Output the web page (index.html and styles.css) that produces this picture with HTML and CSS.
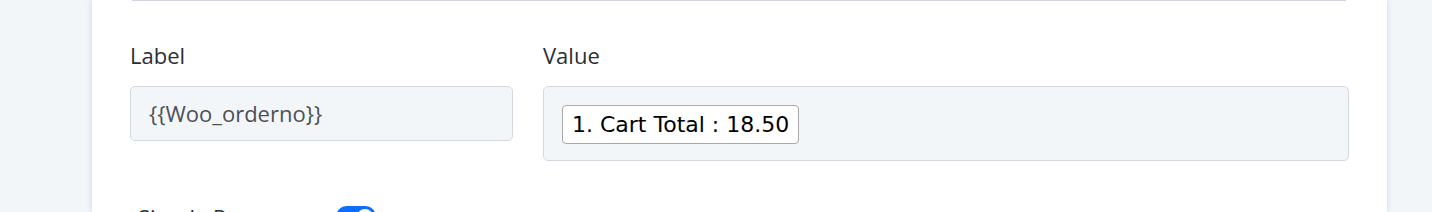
FILE: index.html
```html
<!DOCTYPE html>
<html lang="en">
    <head>
        <meta charset="UTF-8">
        <meta name="viewport" content="width=device-width, initial-scale=1.0">
        <title>Variables</title>
        <link rel="stylesheet" href="styles.css">
    </head>
    <body>
        <main class="card">
            <div class="box-above"></div>

            <section class="campos">
                <div class="campo">
                    <label class="rotulo">Label</label>
                    <div class="entrada">{{Woo_orderno}}</div>
                </div>
                <div class="campo">
                    <label class="rotulo">Value</label>
                    <div class="entrada-valor">
                        <span class="chip">1. Cart Total : 18.50</span>
                    </div>
                </div>
            </section>

            <section class="linha-toggle">
                <span class="texto-toggle">Simple Response</span>
                <span class="toggle"><span class="bolinha"></span></span>
            </section>
        </main>
    </body>
</html>
```

FILE: styles.css
```css
* {
    padding: 0px;
    margin: 0px;
    box-sizing: border-box;
}

body {
    background-color: #f3f6f9;
    font-family: "Open Sans", sans-serif;
    overflow: hidden;
}

.card {
    background-color: #fff;
    margin-left: 92px;
    width: 1295px;
    height: 212px;
    overflow: hidden;
    padding: 0 38px;
    box-shadow: 0 0 6px rgba(180, 190, 215, 0.6);
}

.box-above {
    height: 1px;
    margin-left: 2px;
    margin-right: 3px;
    border-bottom: 1px solid #cfd4dc;
    border-radius: 0 0 4px 4px;
}

.campos {
    display: grid;
    grid-template-columns: 383px 806px;
    column-gap: 30px;
    padding-top: 40px;
}

.rotulo {
    display: block;
    font-size: 22px;
    color: #2b2f33;
    line-height: 28px;
    margin-bottom: 17px;
}

.entrada {
    height: 55px;
    background-color: #f3f6f9;
    border: 1px solid #d3d8df;
    border-radius: 5px;
    padding: 0 18px;
    font-size: 22px;
    line-height: 53px;
    color: #4b5057;
}

.entrada-valor {
    height: 75px;
    background-color: #f3f6f9;
    border: 1px solid #d3d8df;
    border-radius: 5px;
    padding: 18px;
}

.chip {
    display: inline-block;
    height: 39px;
    background-color: #fff;
    border: 1px solid #a9a9a9;
    border-radius: 4px;
    padding: 0 9px;
    font-family: "DejaVu Sans", Verdana, sans-serif;
    font-size: 22px;
    line-height: 37px;
    color: #000;
}

.linha-toggle {
    display: flex;
    align-items: flex-start;
    padding-top: 45px;
    padding-left: 8px;
}

.texto-toggle {
    width: 198px;
    font-size: 22px;
    line-height: 22px;
    color: #2b2f33;
}

.toggle {
    display: block;
    width: 40px;
    height: 22px;
    border-radius: 11px;
    background-color: #0d6efd;
    position: relative;
}

.bolinha {
    position: absolute;
    top: 3px;
    right: 3px;
    width: 16px;
    height: 16px;
    border-radius: 50%;
    background-color: #fff;
}
```
